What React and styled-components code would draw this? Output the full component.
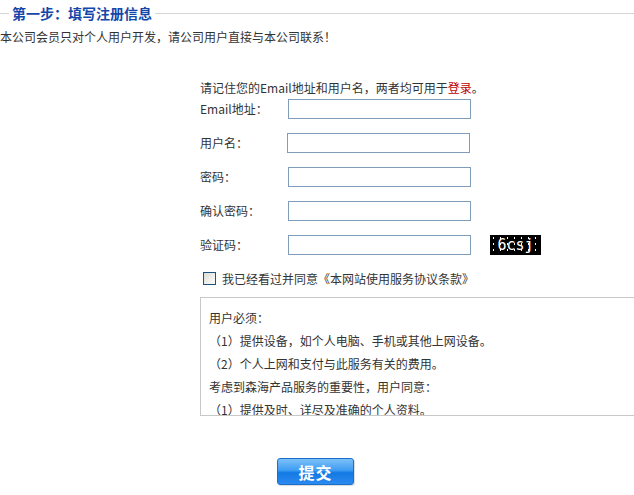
import styled, { createGlobalStyle } from "styled-components";

const GlobalStyle = createGlobalStyle`
  html, body {
    margin: 0;
    padding: 0;
    background: #fff;
    overflow: hidden;
  }
  body {
    font-family: "Noto Sans CJK SC", "Liberation Sans", sans-serif;
    font-size: 12px;
    color: #333;
  }
`;

const fields = [
  { id: 1, label: "Email地址：", shift: 0 },
  { id: 2, label: "用户名：", shift: -1 },
  { id: 3, label: "密码：", shift: 0 },
  { id: 4, label: "确认密码：", shift: 0 },
];

// only the part of the agreement that is visible before scrolling
const terms = [
  "用户必须：",
  "（1）提供设备，如个人电脑、手机或其他上网设备。",
  "（2）个人上网和支付与此服务有关的费用。",
  "考虑到森海产品服务的重要性，用户同意：",
  "（1）提供及时、详尽及准确的个人资料。",
];

const Page = styled.div`
  width: 634px;
  height: 495px;
  overflow: hidden;
`;

const StepHeader = styled.div`
  display: flex;
  align-items: center;
  height: 26px;
  &::before,
  &::after {
    content: "";
    height: 1px;
    background: #d4d4d4;
  }
  &::before {
    width: 9px;
  }
  &::after {
    flex: 1;
  }
`;

const StepTitle = styled.h2`
  margin: 0;
  padding: 0 3px;
  font-size: 14px;
  font-weight: 700;
  color: #1547a8;
  line-height: 26px;
`;

const Notice = styled.p`
  margin: 0;
  line-height: 22px;
`;

const Form = styled.form`
  margin: 32px 0 0 200px;
  display: flex;
  flex-direction: column;
`;

const Intro = styled.p`
  margin: 0 0 3px;
  line-height: 16px;
`;

const Red = styled.span`
  color: #c00000;
`;

const Row = styled.div`
  display: flex;
  align-items: center;
  height: 20px;
  margin-bottom: 14px;
`;

const Label = styled.label`
  width: 88px;
  line-height: 20px;
`;

const Input = styled.input`
  box-sizing: border-box;
  width: 183px;
  height: 20px;
  border: 1px solid #7f9db9;
  margin: 0 0 0 ${(p) => p.$shift || 0}px;
  padding: 0 2px;
  font-size: 12px;
`;

const Captcha = styled.span`
  margin-left: 19px;
  width: 51px;
  height: 20px;
  display: inline-flex;
  align-items: center;
  justify-content: center;
  color: #fff;
  font-family: "DejaVu Sans Mono", monospace;
  font-size: 15px;
  background-color: #000;
  background-image: radial-gradient(#fff 0.6px, transparent 0.8px);
  background-size: 7px 6px;
`;

const Agree = styled.label`
  display: flex;
  align-items: center;
  margin: 1px 0 0 3px;
  height: 16px;
`;

const Check = styled.span`
  box-sizing: border-box;
  width: 13px;
  height: 13px;
  border: 1px solid #1c5180;
  background: linear-gradient(135deg, #dcdcd6, #fdfdfc);
  margin-right: 6px;
`;

const TermsBox = styled.div`
  box-sizing: border-box;
  margin-top: 11px;
  width: 460px;
  height: 119px;
  border: 1px solid #c8c8c8;
  border-right: none;
  padding: 12px 0 0 8px;
  overflow: hidden;
`;

const TermLine = styled.p`
  margin: 0 0 7px;
  line-height: 16px;
  white-space: nowrap;
`;

const Actions = styled.div`
  display: flex;
  margin: 42px 0 0 77px;
`;

const Submit = styled.button`
  width: 77px;
  height: 27px;
  border: 1px solid #1a6fc9;
  border-radius: 3px;
  background: linear-gradient(#7cc0f8 0%, #3f9df2 45%, #1379e3 55%, #2c8af0 100%);
  color: #fff;
  font-family: "Noto Sans CJK SC", sans-serif;
  font-size: 16px;
  font-weight: 700;
  letter-spacing: 1px;
  padding: 0;
  box-shadow: 1px 1px 1px rgba(0, 0, 0, 0.15);
`;

const App = () => (
  <Page>
    <GlobalStyle />
    <StepHeader>
      <StepTitle>第一步：填写注册信息</StepTitle>
    </StepHeader>
    <Notice>本公司会员只对个人用户开发，请公司用户直接与本公司联系！</Notice>
    <Form onSubmit={(e) => e.preventDefault()}>
      <Intro>
        请记住您的Email地址和用户名，两者均可用于<Red>登录</Red>。
      </Intro>
      {fields.map((f) => (
        <Row key={f.id}>
          <Label>{f.label}</Label>
          <Input $shift={f.shift} type={f.id > 2 ? "password" : "text"} />
        </Row>
      ))}
      <Row>
        <Label>验证码：</Label>
        <Input />
        <Captcha>6csj</Captcha>
      </Row>
      <Agree>
        <Check />
        我已经看过并同意《本网站使用服务协议条款》
      </Agree>
      <TermsBox>
        {terms.map((t) => (
          <TermLine key={t}>{t}</TermLine>
        ))}
      </TermsBox>
      <Actions>
        <Submit type="submit">提交</Submit>
      </Actions>
    </Form>
  </Page>
);

export default App;
